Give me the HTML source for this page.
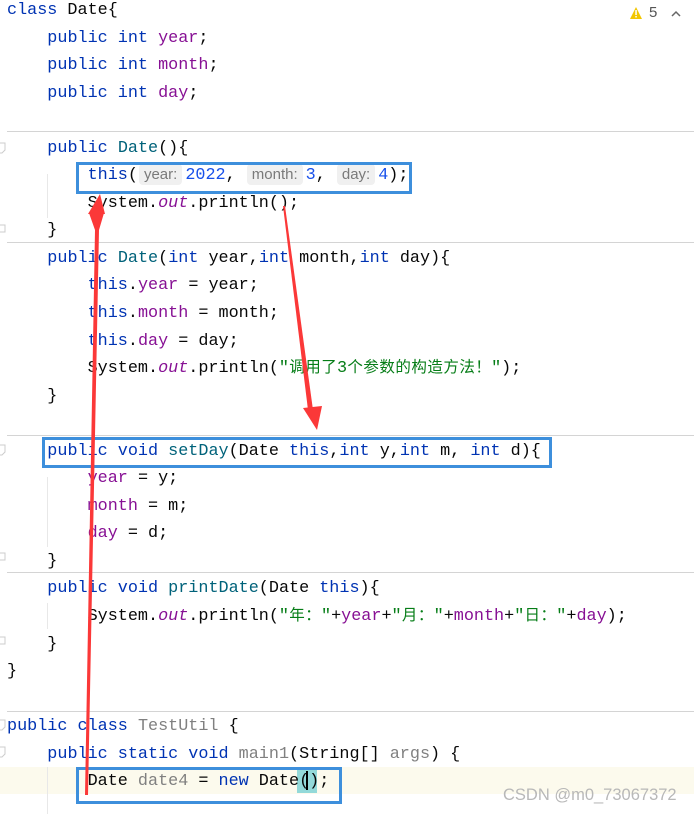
<!DOCTYPE html>
<html><head><meta charset="utf-8"><style>
html,body{margin:0;padding:0;width:694px;height:814px;overflow:hidden;background:#fff;position:relative}
#code{position:absolute;left:7px;top:-3px;font-family:"Liberation Mono","Noto Sans CJK SC",monospace;font-size:16.8px;line-height:27.55px;color:#080808;white-space:pre}
.k{color:#0033b3}.f{color:#871094}.m{color:#00627a}.s{color:#067d17}.n{color:#1750eb}.g{color:#808080}.i{color:#871094;font-style:italic}
.c{display:inline-block;width:16px;text-align:center;font-size:15.5px}
.h{display:inline-block;background:#f0f0f0;color:#7a7a7a;font-family:"Liberation Sans",sans-serif;font-size:15px;line-height:21px;padding:0 5px;border-radius:4px;margin:0 3px 0 1px}
.sep{position:absolute;left:7px;right:0;height:1px;background:#d4d4d4}
.box{position:absolute;border:3px solid #3d8fdc;box-sizing:border-box}
.guide{position:absolute;width:1px;background:#e8e8e8}
</style></head><body>
<div style="position:absolute;left:0;top:767px;width:694px;height:27px;background:#fcfaed"></div>
<div class="guide" style="left:47px;top:174px;height:44px"></div>
<div class="guide" style="left:47px;top:477px;height:70px"></div>
<div class="guide" style="left:47px;top:603px;height:26px"></div>
<div class="guide" style="left:47px;top:767px;height:47px"></div>
<div class="sep" style="top:131px"></div>
<div class="sep" style="top:242px"></div>
<div class="sep" style="top:435px"></div>
<div class="sep" style="top:572px"></div>
<div class="sep" style="top:711px"></div>
<div style="position:absolute;left:297px;top:768px;width:20px;height:25px;background:#93d9d9"></div>
<div id="code"><span class="k">class</span> Date{
    <span class="k">public int</span> <span class="f">year</span>;
    <span class="k">public int</span> <span class="f">month</span>;
    <span class="k">public int</span> <span class="f">day</span>;

    <span class="k">public</span> <span class="m">Date</span>(){
        <span class="k">this</span>(<span class="h">year:</span><span class="n">2022</span>, <span class="h">month:</span><span class="n">3</span>, <span class="h">day:</span><span class="n">4</span>);
        System.<span class="i">out</span>.println();
    }
    <span class="k">public</span> <span class="m">Date</span>(<span class="k">int</span> year,<span class="k">int</span> month,<span class="k">int</span> day){
        <span class="k">this</span>.<span class="f">year</span> = year;
        <span class="k">this</span>.<span class="f">month</span> = month;
        <span class="k">this</span>.<span class="f">day</span> = day;
        System.<span class="i">out</span>.println(<span class="s">"<span class="c">调</span><span class="c">用</span><span class="c">了</span>3<span class="c">个</span><span class="c">参</span><span class="c">数</span><span class="c">的</span><span class="c">构</span><span class="c">造</span><span class="c">方</span><span class="c">法</span><span class="c">！</span>"</span>);
    }

    <span class="k">public void</span> <span class="m">setDay</span>(Date <span class="k">this</span>,<span class="k">int</span> y,<span class="k">int</span> m, <span class="k">int</span> d){
        <span class="f">year</span> = y;
        <span class="f">month</span> = m;
        <span class="f">day</span> = d;
    }
    <span class="k">public void</span> <span class="m">printDate</span>(Date <span class="k">this</span>){
        System.<span class="i">out</span>.println(<span class="s">"<span class="c">年</span><span class="c">：</span>"</span>+<span class="f">year</span>+<span class="s">"<span class="c">月</span><span class="c">：</span>"</span>+<span class="f">month</span>+<span class="s">"<span class="c">日</span><span class="c">：</span>"</span>+<span class="f">day</span>);
    }
}

<span class="k">public class</span> <span class="g">TestUtil</span> {
    <span class="k">public static void</span> <span class="g">main1</span>(String[] <span class="g">args</span>) {
        Date <span class="g">date4</span> = <span class="k">new</span> Date();
</div>
<div style="position:absolute;left:306px;top:771px;width:2px;height:19px;background:#000"></div>
<div class="box" style="left:76px;top:162px;width:336px;height:32px"></div>
<div class="box" style="left:42px;top:437px;width:510px;height:31px"></div>
<div class="box" style="left:76px;top:767px;width:266px;height:37px"></div>
<svg style="position:absolute;left:0;top:0" width="694" height="814">
<polygon fill="#fb3838" points="85,795 88,795 99,230 104,213 89,213 95,230" />
<polygon fill="#fb3838" points="100,194 88,214 105,214" />
<polygon fill="#fb3838" points="283,206 285,206 313,410 308,410" />
<polygon fill="#fb3838" points="303,408 322,406 317,430" />
<polygon fill="#f2c600" points="630,19 636,7 642,19"/>
<rect x="635.3" y="10" width="1.5" height="5" fill="#fff"/><rect x="635.3" y="16" width="1.5" height="1.5" fill="#fff"/>
<polyline points="672,16 676,12 680,16" fill="none" stroke="#666" stroke-width="1.5"/>
<g fill="none" stroke="#ccc" stroke-width="1"><path d="M0,143 h5 v7 l-3,3 h-2"/><path d="M0,225 h5 v7 h-5"/><path d="M0,445 h5 v7 l-3,3 h-2"/><path d="M0,553 h5 v7 h-5"/><path d="M0,720 h5 v7 l-3,3 h-2"/><path d="M0,747 h5 v7 l-3,3 h-2"/><path d="M0,637 h5 v7 h-5"/></g>
</svg>
<div style="position:absolute;left:649px;top:4px;font:15px 'Liberation Sans',sans-serif;color:#555">5</div>
<div style="position:absolute;left:503px;top:786px;font:16.5px 'Liberation Sans',sans-serif;color:#b8b8b8">CSDN @m0_73067372</div>
</body></html>
